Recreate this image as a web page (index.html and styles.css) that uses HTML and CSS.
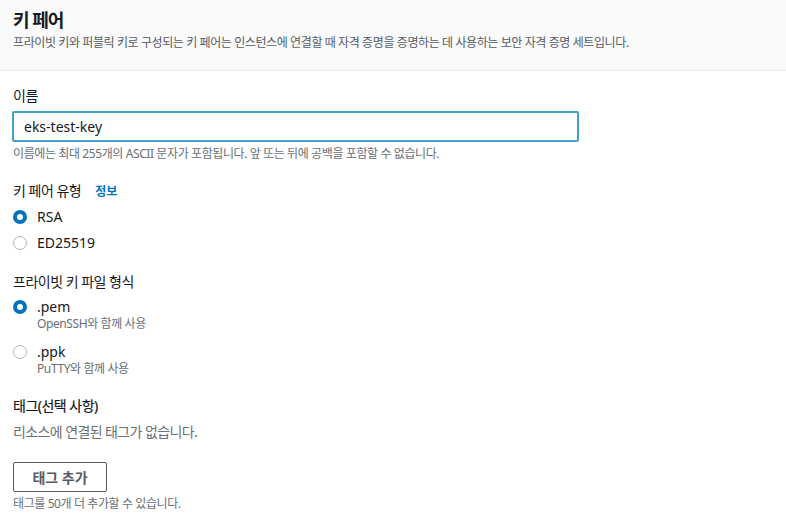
FILE: index.html
```html
<!DOCTYPE html>
<html lang="ko">
<head>
<meta charset="UTF-8">
<meta name="viewport" content="width=device-width, initial-scale=1.0">
<title>키 페어</title>
<link rel="stylesheet" href="styles.css">
</head>
<body>

<div class="header">
    <h1 class="title">키 페어</h1>
    <p class="desc">프라이빗 키와 퍼블릭 키로 구성되는 키 페어는 인스턴스에 연결할 때 자격 증명을 증명하는 데 사용하는 보안 자격 증명 세트입니다.</p>
</div>

<div class="content">
    <div class="field">
        <label class="label" for="keyName">이름</label>
        <input class="text-input" id="keyName" type="text" value="eks-test-key">
        <div class="hint">이름에는 최대 255개의 ASCII 문자가 포함됩니다. 앞 또는 뒤에 공백을 포함할 수 없습니다.</div>
    </div>

    <div class="field">
        <div class="label">키 페어 유형<a class="info" href="#">정보</a></div>
        <div class="radio-group">
            <div class="radio checked"><span class="dot"></span><span class="radio-text">RSA</span></div>
            <div class="radio"><span class="dot"></span><span class="radio-text">ED25519</span></div>
        </div>
    </div>

    <div class="field">
        <div class="label">프라이빗 키 파일 형식</div>
        <div class="radio-group">
            <div class="radio checked">
                <span class="dot"></span>
                <div>
                    <div class="radio-text">.pem</div>
                    <div class="radio-desc">OpenSSH와 함께 사용</div>
                </div>
            </div>
            <div class="radio wide">
                <span class="dot"></span>
                <div>
                    <div class="radio-text">.ppk</div>
                    <div class="radio-desc">PuTTY와 함께 사용</div>
                </div>
            </div>
        </div>
    </div>

    <div class="field tags">
        <div class="label strong">태그(선택 사항)</div>
        <div class="empty">리소스에 연결된 태그가 없습니다.</div>
        <button class="btn" type="button">태그 추가</button>
        <div class="hint">태그를 50개 더 추가할 수 있습니다.</div>
    </div>
</div>

</body>
</html>
```

FILE: styles.css
```css
/* 기본 */
body {
    margin: 0;
    font-family: "Noto Sans", "Noto Sans CJK KR", sans-serif;
    color: #16191f;
    background-color: #fff;
    letter-spacing: -0.4px;
}

/* 상단 헤더 */
.header {
    background-color: #fafafa;
    border-bottom: 1px solid #eaeded;
    padding: 9px 13px 19px;
}

.title {
    margin: 0;
    font-size: 18px;
    line-height: 22px;
    font-weight: 700;
    letter-spacing: -1px;
}

.desc {
    margin: 4px 0 0;
    font-size: 12px;
    line-height: 16px;
    color: #545b64;
}

/* 본문 */
.content {
    padding: 15px 12px 0 13px;
}

.field {
    display: flex;
    flex-direction: column;
    margin-bottom: 19px;
}

.label {
    font-size: 14px;
    line-height: 20px;
    letter-spacing: -0.5px;
}

.label.strong {
    -webkit-text-stroke: 0.2px #16191f;
}

.info {
    margin-left: 14px;
    font-size: 12px;
    font-weight: 700;
    letter-spacing: 0;
    color: #0073bb;
    text-decoration: none;
}

.text-input {
    box-sizing: border-box;
    width: 567px;
    height: 31px;
    margin: 5px 0 0 -1px;
    padding: 0 10px;
    border: 2px solid #41a1c9;
    border-radius: 2px;
    font-family: inherit;
    font-size: 14px;
    letter-spacing: 0;
    color: #16191f;
    outline: none;
}

.hint {
    margin-top: 4px;
    font-size: 12px;
    line-height: 16px;
    color: #687078;
}

/* 라디오 */
.radio-group {
    display: flex;
    flex-direction: column;
    gap: 6px;
    margin-top: 5px;
}

.radio {
    display: flex;
    align-items: flex-start;
    gap: 10px;
}

.radio.wide {
    margin-top: 4px;
}

.dot {
    box-sizing: border-box;
    flex: none;
    width: 14px;
    height: 14px;
    margin-top: 3px;
    border: 1px solid #aab7b8;
    border-radius: 50%;
    background-color: #fff;
}

.radio.checked .dot {
    border: 4px solid #0073bb;
}

.radio-text {
    font-size: 14px;
    line-height: 20px;
    letter-spacing: 0;
}

.radio-desc {
    margin-top: -1px;
    font-size: 12px;
    line-height: 16px;
    color: #687078;
}

/* 태그 */
.empty {
    margin-top: 6px;
    font-size: 14px;
    line-height: 20px;
    letter-spacing: -0.6px;
    color: #687078;
}

.btn {
    align-self: flex-start;
    box-sizing: border-box;
    width: 94px;
    height: 30px;
    margin-top: 20px;
    border: 1px solid #545b64;
    border-radius: 2px;
    background-color: #fff;
    font-family: inherit;
    font-size: 14px;
    font-weight: 700;
    letter-spacing: 0;
    color: #545b64;
    cursor: pointer;
}
```
